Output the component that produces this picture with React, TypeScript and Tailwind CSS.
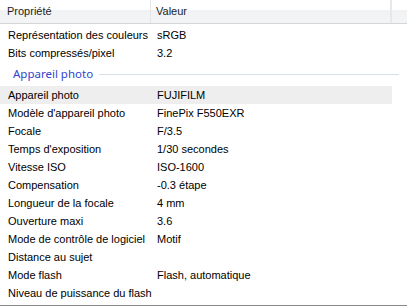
import React from "react";

type Row = { label: string; value: string; selected?: boolean };

const fileRows: Row[] = [
  { label: "Représentation des couleurs", value: "sRGB" },
  { label: "Bits compressés/pixel", value: "3.2" },
];

const cameraRows: Row[] = [
  { label: "Appareil photo", value: "FUJIFILM", selected: true },
  { label: "Modèle d'appareil photo", value: "FinePix F550EXR" },
  { label: "Focale", value: "F/3.5" },
  { label: "Temps d'exposition", value: "1/30 secondes" },
  { label: "Vitesse ISO", value: "ISO-1600" },
  { label: "Compensation", value: "-0.3 étape" },
  { label: "Longueur de la focale", value: "4 mm" },
  { label: "Ouverture maxi", value: "3.6" },
  { label: "Mode de contrôle de logiciel", value: "Motif" },
  { label: "Distance au sujet", value: "" },
  { label: "Mode flash", value: "Flash, automatique" },
  { label: "Niveau de puissance du flash", value: "" },
];

function PropRow({ row }: { row: Row }) {
  return (
    <div
      className={
        "flex h-[18px] w-[392px] items-center text-[11px] leading-none text-black " +
        (row.selected ? "bg-[#eeeeee]" : "")
      }
    >
      <div className="w-[157px] shrink-0 pl-[8px] whitespace-nowrap">{row.label}</div>
      <div className="whitespace-nowrap">{row.value}</div>
    </div>
  );
}

export default function App() {
  return (
    <div
      className="relative h-[306px] w-[407px] overflow-hidden bg-white"
      style={{ fontFamily: '"Liberation Sans", Arial, sans-serif' }}
    >
      {/* column headers */}
      <div className="flex h-[24px] border-b border-[#d5d5d5] bg-[linear-gradient(to_bottom,#ffffff_0%,#ffffff_42%,#f1f2f4_43%,#f3f4f6_100%)] text-[11px] text-[#1e1e1e]">
        <div className="flex w-[151px] items-center border-r border-[#e3e5e8] pl-[7px]">Propriété</div>
        <div className="flex w-[241px] items-center border-r-2 border-[#e6e8eb] pl-[5px]">Valeur</div>
        <div className="flex-1" />
      </div>

      <div className="pt-[2px]">
        {fileRows.map((r) => (
          <PropRow key={r.label} row={r} />
        ))}

        {/* group header */}
        <div className="flex h-[24px] items-center pl-[13px] pr-[8px]">
          <span
            className="text-[11.5px] text-[#3344cc] whitespace-nowrap"
            style={{ fontFamily: '"Noto Sans", "Open Sans", sans-serif' }}
          >
            Appareil photo
          </span>
          <div className="ml-[6px] h-px flex-1 bg-[#d5dfe5]" />
        </div>

        {cameraRows.map((r) => (
          <PropRow key={r.label} row={r} />
        ))}
      </div>

      <div className="absolute bottom-0 left-0 h-px w-full bg-[#8a8a8a]" />
    </div>
  );
}
